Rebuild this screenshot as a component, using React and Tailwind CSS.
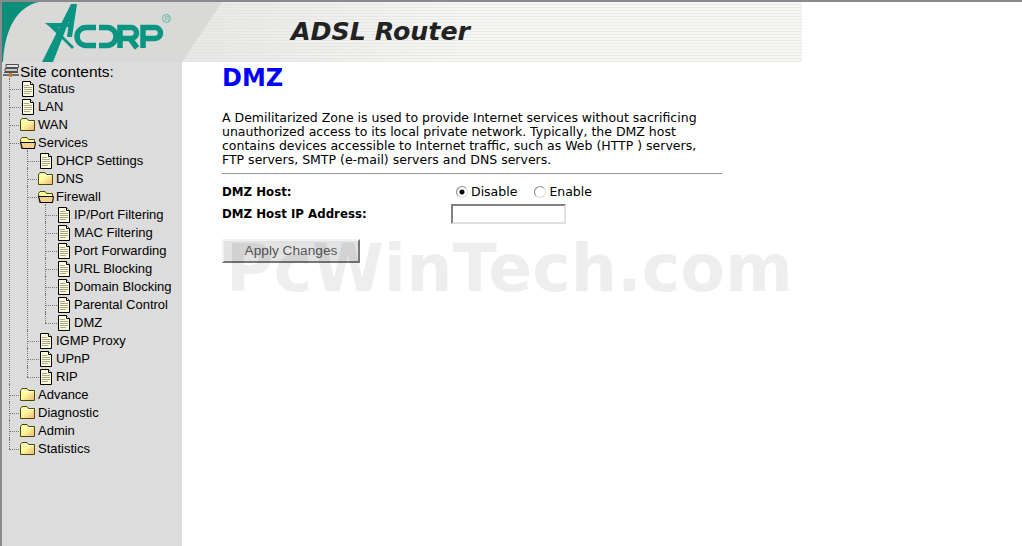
const tree = [
  { label: 'Status', icon: 'doc' },
  { label: 'LAN', icon: 'doc' },
  { label: 'WAN', icon: 'folder' },
  {
    label: 'Services',
    icon: 'open',
    children: [
      { label: 'DHCP Settings', icon: 'doc' },
      { label: 'DNS', icon: 'folder' },
      {
        label: 'Firewall',
        icon: 'open',
        children: [
          { label: 'IP/Port Filtering', icon: 'doc' },
          { label: 'MAC Filtering', icon: 'doc' },
          { label: 'Port Forwarding', icon: 'doc' },
          { label: 'URL Blocking', icon: 'doc' },
          { label: 'Domain Blocking', icon: 'doc' },
          { label: 'Parental Control', icon: 'doc' },
          { label: 'DMZ', icon: 'doc' },
        ],
      },
      { label: 'IGMP Proxy', icon: 'doc' },
      { label: 'UPnP', icon: 'doc' },
      { label: 'RIP', icon: 'doc' },
    ],
  },
  { label: 'Advance', icon: 'folder' },
  { label: 'Diagnostic', icon: 'folder' },
  { label: 'Admin', icon: 'folder' },
  { label: 'Statistics', icon: 'folder' },
];

const DocIcon = () => (
  <svg width="14" height="18" viewBox="0 0 14 18" className="shrink-0">
    <path d="M1.5 1.5H9.5L12.5 4.5V16.5H1.5Z" fill="#fdfbd8" stroke="#000" />
    <path d="M9.5 1.5V4.5H12.5" fill="#fff" stroke="#000" />
    <path d="M3 5.5H8M3 7.5H11M3 9.5H11M3 11.5H11M3 13.5H9" stroke="#a8a890" />
  </svg>
);

const FolderIcon = () => (
  <svg width="16" height="18" viewBox="0 0 16 18" className="-mx-px shrink-0">
    <defs>
      <linearGradient id="folderFill" x1="0" y1="0" x2="1" y2="1">
        <stop offset="0.4" stopColor="#ffff9c" />
        <stop offset="1" stopColor="#f0b080" />
      </linearGradient>
    </defs>
    <path d="M0.5 4.5L2 2.5H7L8.5 4.5H14.5V14.5H0.5Z" fill="url(#folderFill)" stroke="#4a4a00" />
    <path d="M1.5 5.5H13.5" stroke="#fffff0" />
  </svg>
);

const OpenFolderIcon = () => (
  <svg width="16" height="18" viewBox="0 0 16 18" className="-mx-px shrink-0">
    <path d="M0.5 5.5L2 3.5H7L8.5 5.5H14.5V14.5H1.5Z" fill="#ffff9c" stroke="#4a4a00" />
    <path d="M0.5 8.5H11.5L15.5 8.5L14.5 14.5H2.5Z" fill="#f5d08c" stroke="#000" />
  </svg>
);

const ServerIcon = () => (
  <svg width="16" height="14" viewBox="0 0 16 14" className="shrink-0">
    <path d="M3 0.5H15.5V3.5H3Z" fill="#e4e4e4" stroke="#505050" />
    <path d="M2 4.5H14.5V7.5H2Z" fill="#c8c8c8" stroke="#505050" />
    <path d="M1 8.5H15" stroke="#505050" />
    <path d="M0 11H16" stroke="#000" />
    <path d="M6 9H9V13H6Z" fill="#e07a20" />
  </svg>
);

const icons = { doc: DocIcon, folder: FolderIcon, open: OpenFolderIcon };

const TreeNode = ({ node, last }) => {
  const Icon = icons[node.icon];
  return (
    <li className="relative">
      {/* pointillés verticaux */}
      <span
        className={`absolute left-0 top-[-2px] w-0 border-l border-dotted border-[#777] ${
          last ? 'h-[11px]' : 'h-[calc(100%+2px)]'
        }`}
      />
      <div className="flex h-[18px] items-center">
        <span className="h-0 w-[12px] shrink-0 border-t border-dotted border-[#777]" />
        <Icon />
        <span className="ml-[3px] whitespace-nowrap pb-[1px]">{node.label}</span>
      </div>
      {node.children && (
        <ul className="ml-[18px]">
          {node.children.map((child, i) => (
            <TreeNode key={child.label} node={child} last={i === node.children.length - 1} />
          ))}
        </ul>
      )}
    </li>
  );
};

const Logo = () => (
  <svg width="222" height="60" viewBox="2 2 222 60" className="shrink-0">
    <path d="M2 2H222L182 62H2Z" fill="#d9dad8" />
    <path d="M2 2H39C17 7 5 28 3 62H2Z" fill="#0b8f7b" />
    <g fill="#0a9482">
      <path d="M42 62L71 4H77L72 37H67L69 21L53 62Z" />
      <path d="M45 23H71L70 27H58L62 31L60 35Z" />
      <path d="M50 27L53 26L74 47L72 49Z" />
    </g>
    <g fill="none" stroke="#0a9482" strokeWidth="5.5">
      <path d="M96 27.5H86A9 9 0 0 0 86 45.5H96" />
      <path d="M99 27.5H107A9 9 0 0 1 107 45.5H99" />
      <path d="M120 48V27.5H131A5.5 5.5 0 0 1 131 38.5H122M130 38.5L137 48" />
      <path d="M143 48V27.5H155A5.5 5.5 0 0 1 155 38.5H145" />
    </g>
    <circle cx="166.5" cy="18.5" r="4" fill="none" stroke="#5cb8a8" />
    <text x="164.4" y="21" fontSize="7" fill="#5cb8a8" fontFamily="Liberation Sans, sans-serif">
      R
    </text>
  </svg>
);

const App = () => {
  return (
    <div className="relative flex h-[546px] flex-col overflow-hidden border-l-2 border-t-2 border-[#8a8a8e] bg-white font-['Liberation_Sans',sans-serif] text-black">
      {/* Bandeau */}
      <header className="relative flex h-[60px] w-[800px] items-center bg-[repeating-linear-gradient(180deg,#f7f8f6_0,#f7f8f6_2px,#e9ebe7_2px,#e9ebe7_3px)]">
        <div className="absolute inset-0 bg-gradient-to-r from-[#d9dad8]/80 to-transparent to-60%" />
        <div className="relative flex items-center">
          <Logo />
          <h2 className="ml-[67px] font-['DejaVu_Sans',sans-serif] text-[25.3px] font-bold italic leading-none text-[#222]">
            ADSL Router
          </h2>
        </div>
      </header>

      <div className="flex min-h-0 flex-1">
        {/* Menu */}
        <aside className="w-[180px] shrink-0 bg-[#dcdcdc] text-[13px] leading-none">
          <div className="flex h-[18px] items-center pl-[1px]">
            <ServerIcon />
            <span className="ml-[1px] pt-[2px] text-[15.5px]">Site contents:</span>
          </div>
          <ul className="ml-[7px]">
            {tree.map((node, i) => (
              <TreeNode key={node.label} node={node} last={i === tree.length - 1} />
            ))}
          </ul>
        </aside>

        {/* Contenu */}
        <main className="w-[540px] pl-[40px] font-['DejaVu_Sans',sans-serif] text-[12.5px] leading-[14px]">
          <h1 className="mt-[2px] text-[24px] font-bold leading-[28px] text-[#0000ff]">DMZ</h1>
          <p className="mt-[19px] w-[500px]">
            A Demilitarized Zone is used to provide Internet services without sacrificing
            unauthorized access to its local private network. Typically, the DMZ host contains
            devices accessible to Internet traffic, such as Web (HTTP ) servers, FTP servers, SMTP
            (e-mail) servers and DNS servers.
          </p>
          <hr className="mt-[6px] w-[500px] border-t border-[#999]" />

          <div className="mt-[7px] grid w-[500px] grid-cols-[229px_1fr] items-center">
            <strong className="h-[22px] text-[11.8px] leading-[22px]">DMZ Host:</strong>
            <div className="flex h-[22px] items-center pl-[5px]">
              <input
                type="radio"
                name="dmz"
                defaultChecked
                className="size-[12px] appearance-none rounded-full border border-b-[#ddd] border-l-[#888] border-r-[#ddd] border-t-[#888] bg-white checked:bg-[radial-gradient(circle,#000_0,#000_2px,#fff_3px)]"
              />
              <span className="ml-[3px]">Disable</span>
              <input
                type="radio"
                name="dmz"
                className="ml-[17px] size-[12px] appearance-none rounded-full border border-b-[#ddd] border-l-[#888] border-r-[#ddd] border-t-[#888] bg-white"
              />
              <span className="ml-[3px]">Enable</span>
            </div>
            <strong className="h-[22px] text-[11.8px] leading-[22px]">DMZ Host IP Address:</strong>
            <input
              type="text"
              className="h-[20px] w-[115px] border-2 border-b-[#e0e0e0] border-l-[#808080] border-r-[#e0e0e0] border-t-[#808080] bg-white"
            />
          </div>

          <button className="mt-[14px] h-[24px] w-[138px] border-2 border-b-[#777] border-l-[#f2f2f2] border-r-[#777] border-t-[#f2f2f2] bg-[#e2e2e2] pb-[1px] font-['Liberation_Sans',sans-serif] text-[13.7px] text-[#555]">
            Apply Changes
          </button>
        </main>
      </div>

      {/* Filigrane */}
      <div className="pointer-events-none absolute left-[224px] top-[229px] whitespace-nowrap font-['DejaVu_Sans',sans-serif] text-[65px] font-bold leading-[76px] text-black/[0.065]">
        PcWinTech.com
      </div>
    </div>
  );
};

export default App;
